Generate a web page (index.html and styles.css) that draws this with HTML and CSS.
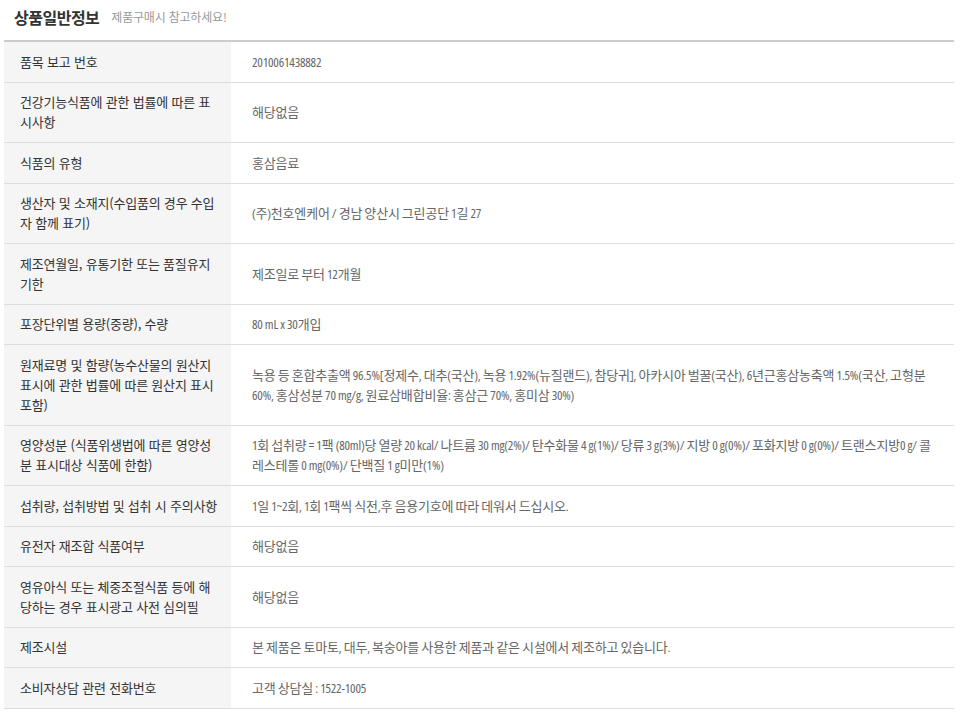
FILE: index.html
```html
<!DOCTYPE html>
<html lang="ko">
<head>
<meta charset="utf-8">
<title>상품일반정보</title>
<link rel="stylesheet" href="styles.css">
</head>
<body>
<div class="wrap">
  <div class="head">
    <h2 class="title">상품일반정보</h2>
    <span class="sub">제품구매시 참고하세요!</span>
  </div>
  <table class="info">
    <tbody>
      <tr><th>품목 보고 번호</th><td>2010061438882</td></tr>
      <tr><th>건강기능식품에 관한 법률에 따른 표시사항</th><td>해당없음</td></tr>
      <tr><th>식품의 유형</th><td>홍삼음료</td></tr>
      <tr><th>생산자 및 소재지(수입품의 경우 수입자 함께 표기)</th><td>(주)천호엔케어 / 경남 양산시 그린공단 1길 27</td></tr>
      <tr><th>제조연월일, 유통기한 또는 품질유지기한</th><td>제조일로 부터 12개월</td></tr>
      <tr><th>포장단위별 용량(중량), 수량</th><td>80 mL x 30개입</td></tr>
      <tr><th>원재료명 및 함량(농수산물의 원산지 표시에 관한 법률에 따른 원산지 표시 포함)</th><td>녹용 등 혼합추출액 96.5%[정제수, 대추(국산), 녹용 1.92%(뉴질랜드), 참당귀], 아카시아 벌꿀(국산), 6년근홍삼농축액 1.5%(국산, 고형분 60%, 홍삼성분 70 mg/g, 원료삼배합비율: 홍삼근 70%, 홍미삼 30%)</td></tr>
      <tr><th>영양성분 (식품위생법에 따른 영양성분 표시대상 식품에 한함)</th><td>1회 섭취량 = 1팩 (80ml)당 열량 20 kcal/ 나트륨 30 mg(2%)/ 탄수화물 4 g(1%)/ 당류 3 g(3%)/ 지방 0 g(0%)/ 포화지방 0 g(0%)/ 트랜스지방0 g/ 콜레스테롤 0 mg(0%)/ 단백질 1 g미만(1%)</td></tr>
      <tr><th>섭취량, 섭취방법 및 섭취 시 주의사항</th><td>1일 1~2회, 1회 1팩씩 식전,후 음용기호에 따라 데워서 드십시오.</td></tr>
      <tr><th>유전자 재조합 식품여부</th><td>해당없음</td></tr>
      <tr><th>영유아식 또는 체중조절식품 등에 해당하는 경우 표시광고 사전 심의필</th><td>해당없음</td></tr>
      <tr><th>제조시설</th><td>본 제품은 토마토, 대두, 복숭아를 사용한 제품과 같은 시설에서 제조하고 있습니다.</td></tr>
      <tr><th>소비자상담 관련 전화번호</th><td>고객 상담실 : 1522-1005</td></tr>
    </tbody>
  </table>
</div>
</body>
</html>
```

FILE: styles.css
```css
html, body {
  margin: 0;
  padding: 0;
  background: #fff;
}
body {
  font-family: "Noto Sans CJK KR", "Noto Sans", sans-serif;
  color: #333;
}
.wrap {
  width: 950px;
  margin-left: 4px;
}
.head {
  height: 40px;
  display: flex;
  align-items: center;
  padding-left: 10px;
  gap: 12px;
  box-sizing: border-box;
  padding-bottom: 6px;
}
.title {
  margin: 0;
  font-size: 16px;
  font-weight: 700;
  letter-spacing: -0.5px;
  color: #333;
  line-height: 20px;
}
.sub {
  font-size: 12px;
  color: #999;
  letter-spacing: -0.2px;
  line-height: 20px;
}
.info {
  width: 950px;
  border-collapse: collapse;
  border-top: 2px solid #cccccc;
  table-layout: fixed;
}
.info th,
.info td {
  border-bottom: 1px solid #dddddd;
  padding: 9.75px 0;
  line-height: 20px;
  font-size: 13px;
  letter-spacing: -0.2px;
  vertical-align: middle;
  text-align: left;
  word-break: normal;
}
.info th {
  width: 227px;
  box-sizing: border-box;
  padding-left: 16px;
  padding-right: 13px;
  background: #f5f5f5;
  font-weight: 400;
  color: #333;
}
.info td {
  font-family: "Open Sans", "Noto Sans CJK KR", sans-serif;
  font-stretch: condensed;
  padding-left: 21px;
  padding-right: 20px;
  color: #666;
}
```
